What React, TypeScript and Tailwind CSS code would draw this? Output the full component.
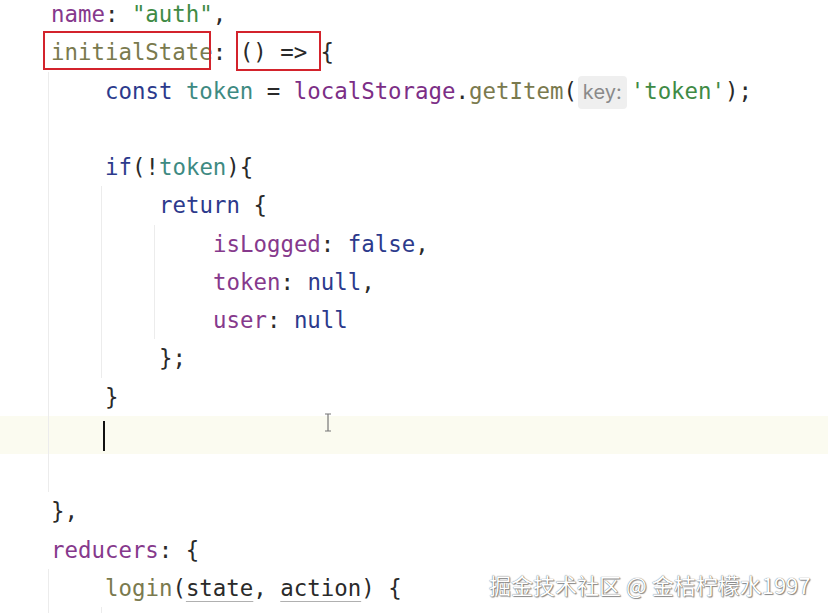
import React from "react";

const P = "text-[#86398c]"; // property
const K = "text-[#2c3a8c]"; // keyword
const S = "text-[#3f8b45]"; // string
const V = "text-[#3e8a82]"; // variable
const F = "text-[#7a7a4e]"; // function/olive
const L = "text-[#7c2e86]"; // global

function Line({ children }: { children?: React.ReactNode }) {
  return <div className="h-[38.27px] leading-[38.27px] whitespace-pre">{children}</div>;
}

export default function App() {
  return (
    <div
      className="relative h-[613px] w-[828px] overflow-hidden bg-white text-[#2a2a2a]"
      style={{ fontFamily: '"DejaVu Sans Mono", "Liberation Mono", monospace' }}
    >
      {/* current line highlight */}
      <div className="absolute left-0 right-0 top-[416px] h-[38px] bg-[#fbfbf0]" />

      <div className="relative mt-[-5px] pl-[51px] text-[22.4px]">
        <Line>
          <span className={P}>name</span>: <span className={S}>"auth"</span>,
        </Line>
        <Line>
          <span className={F}>initialState</span>: () =&gt; {"{"}
        </Line>
        <div className="ml-[-3px] border-l border-[#ececec] pl-[56px]">
          <Line>
            <span className={K}>const</span> <span className={V}>token</span> = <span className={L}>localStorage</span>.<span className={F}>getItem</span>(
            <span
              className="mx-[1px] inline-block rounded-[4px] bg-[#efefef] px-[5px] align-middle text-[20px] leading-[33px] text-[#8a8a8a]"
              style={{ fontFamily: '"Inter", "Noto Sans", sans-serif' }}
            >
              key:
            </span>
            <span className="ml-[3px]"></span>
            <span className={S}>'token'</span>);
          </Line>
          <Line />
          <Line>
            <span className={K}>if</span>(!<span className={V}>token</span>){"{"}
          </Line>
          <div className="ml-[-4px] border-l border-[#ececec] pl-[57px]">
            <Line>
              <span className={K}>return</span> {"{"}
            </Line>
            <div className="ml-[-5px] border-l border-[#ececec] pl-[58px]">
              <Line>
                <span className={P}>isLogged</span>: <span className={K}>false</span>,
              </Line>
              <Line>
                <span className={P}>token</span>: <span className={K}>null</span>,
              </Line>
              <Line>
                <span className={P}>user</span>: <span className={K}>null</span>
              </Line>
            </div>
            <Line>{"};"}</Line>
          </div>
          <Line>{"}"}</Line>
          <Line>
            <span className="ml-[-2px] inline-block h-[30px] w-[2px] bg-[#111] align-middle" />
          </Line>
          <Line />
        </div>
        <Line>{"},"}</Line>
        <Line>
          <span className={P}>reducers</span>: {"{"}
        </Line>
        <div className="ml-[-3px] border-l border-[#ececec] pl-[56px]">
          <Line>
            <span className={F}>login</span>(
            <span className="underline decoration-[#b0b0b0] decoration-1 underline-offset-[5px]">state</span>,{" "}
            <span className="underline decoration-[#b0b0b0] decoration-1 underline-offset-[5px]">action</span>) {"{"}
          </Line>
          <div className="ml-[-4px] border-l border-[#ececec] pl-[57px]">
            <Line />
          </div>
        </div>
      </div>

      {/* red annotation boxes */}
      <div className="absolute left-[43px] top-[31px] h-[39px] w-[168px] border-2 border-[#d3232c]" />
      <div className="absolute left-[236px] top-[31px] h-[40px] w-[85px] border-2 border-[#d3232c]" />

      {/* mouse I-beam */}
      <svg className="absolute left-[324px] top-[413px]" width="8" height="19" viewBox="0 0 8 19">
        <path d="M1 1h6M4 1v17M1 18h6" stroke="#777" strokeWidth="1.2" fill="none" />
      </svg>

      {/* watermark */}
      <div
        className="absolute left-[489px] top-[568px] whitespace-nowrap text-[22px] leading-[32px] text-white [text-shadow:0_0_1px_#444,1px_1px_1px_rgba(0,0,0,0.45)]"
        style={{ fontFamily: '"Noto Sans CJK SC", "Noto Sans", sans-serif' }}
      >
        掘金技术社区 @ 金桔柠檬水1997
      </div>
    </div>
  );
}
